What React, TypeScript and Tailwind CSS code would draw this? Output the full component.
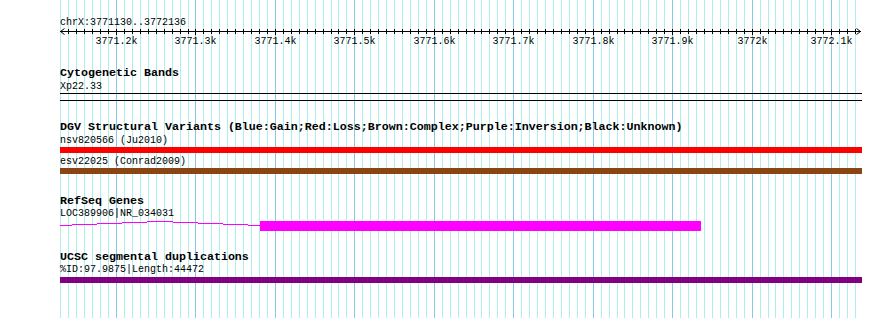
const START = 3771130
const END   = 3772136
const SCALE = 0.7945   // px per bp
const LEFT  = 60.4     // px of START in the image

const px = (bp: number) => Math.round(LEFT + (bp - START) * SCALE)

const ticks = Array.from({ length: 101 }, (_, i) => START + i * 10)

function Grid() {
  return (
    <svg className="absolute inset-0" width={890} height={318} shapeRendering="crispEdges">
      {ticks.map(bp => (
        <line
          key={bp}
          x1={px(bp) + 0.5} x2={px(bp) + 0.5} y1={0} y2={318}
          stroke={bp % 100 === 0 ? '#87c8ea' : '#aeeeee'}
          strokeWidth={1}
        />
      ))}
    </svg>
  )
}

function Ruler() {
  const off = 60
  const right = px(END) + 1
  return (
    <svg width={802} height={18} className="block overflow-visible font-['Liberation_Mono',monospace] text-[10px]" shapeRendering="crispEdges">
      <line x1={0} x2={right - off} y1={2.5} y2={2.5} stroke="black" />
      {ticks.slice(1).map(bp => (
        <line
          key={bp}
          x1={px(bp) - off + 0.5} x2={px(bp) - off + 0.5}
          y1={0} y2={bp % 100 === 0 ? 6 : 5}
          stroke="black"
        />
      ))}
      {/* arrow heads */}
      <polyline points="4.5,-0.5 0.5,2.5 4.5,5.5" fill="none" stroke="black" shapeRendering="auto" />
      <polyline points={`${right - off - 4.5},-0.5 ${right - off - 0.5},2.5 ${right - off - 4.5},5.5`} fill="none" stroke="black" shapeRendering="auto" />
      {ticks.filter(bp => bp % 100 === 0).map(bp => (
        <text key={bp} x={px(bp) - off + 0.5} y={14.6} textAnchor="middle" fill="black" shapeRendering="auto">
          {bp / 1000}k
        </text>
      ))}
    </svg>
  )
}

const label = "font-['Liberation_Mono',monospace] text-[10px] leading-[12px] text-black whitespace-pre"
const title = "font-['Liberation_Mono',monospace] text-[11.67px] leading-[13px] font-bold text-black whitespace-pre"

export default function App() {
  return (
    <div className="relative w-[890px] h-[318px] overflow-hidden bg-white">
      <Grid />
      <div className="relative flex flex-col pl-[60px] pt-[17px]">
        <div className={label}>chrX:3771130..3772136</div>
        <Ruler />

        <div className={`${title} mt-[20px]`}>Cytogenetic Bands</div>
        <div className={`${label} mt-[1px]`}>Xp22.33</div>
        <div className="w-[802px] h-[8px] border-y border-black" />

        <div className={`${title} mt-[20px]`}>DGV Structural Variants (Blue:Gain;Red:Loss;Brown:Complex;Purple:Inversion;Black:Unknown)</div>
        <div className={`${label} mt-[1px]`}>nsv820566 (Ju2010)</div>
        <div className="w-[802px] h-[6px] bg-[#ff0000]" />
        <div className={`${label} mt-[3px]`}>esv22025 (Conrad2009)</div>
        <div className="w-[802px] h-[6px] bg-[#8b4513]" />

        <div className={`${title} mt-[21px]`}>RefSeq Genes</div>
        <div className={label}>LOC389906|NR_034031</div>
        <div className="mt-[1px] flex h-[10px]">
          <svg width={200} height={10} className="block" shapeRendering="crispEdges">
            <polyline points="0,4.5 100,0.5 200,4.5" fill="none" stroke="#ff00ff" strokeWidth={1} />
          </svg>
          <div className="w-[441px] h-[10px] bg-[#ff00ff]" />
        </div>

        <div className={`${title} mt-[20px]`}>UCSC segmental duplications</div>
        <div className={label}>%ID:97.9875|Length:44472</div>
        <div className="mt-[1px] w-[802px] h-[6px] bg-[#800080]" />
      </div>
    </div>
  )
}
